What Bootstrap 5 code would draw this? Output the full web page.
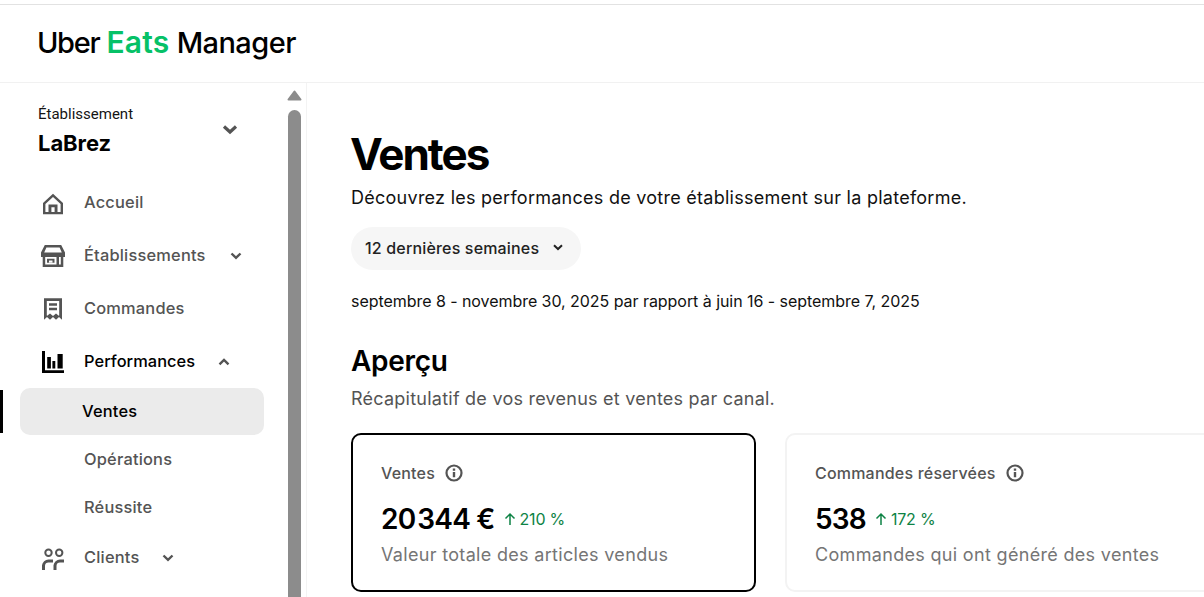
<!DOCTYPE html>
<html lang="fr">
<head>
<meta charset="utf-8">
<title>Uber Eats Manager</title>
<link href="https://cdn.jsdelivr.net/npm/bootstrap@5.3.0/dist/css/bootstrap.min.css" rel="stylesheet">
<style>
html,body{height:597px;overflow:hidden;background:#fff}
body{font-family:"Inter","Liberation Sans",sans-serif;color:#000}
.topline{height:1px;margin-top:4px;background:#e2e2e2}
.appbar{height:78px;border-bottom:1px solid #f1f1f1;padding-left:37px}
.logo{font-size:29px;font-weight:500;letter-spacing:-.55px;line-height:1;color:#000;padding-bottom:4px;white-space:nowrap}
.logo-uber{letter-spacing:-1.35px}
.logo b{font-size:30px;font-weight:600;color:#06c167;letter-spacing:.2px}
.bodyrow{height:514px;overflow:hidden}
.side{width:307px;border-right:1px solid #f3f3f3;flex:none}
.sidenav{width:287px;flex:none;overflow:hidden}
.sbar{width:19px;flex:none;padding-top:7px}
.sbar-arrow{display:block}
.sbar-thumb{width:13px;margin:9px 0 0 1px;height:500px;background:#8c8c8c;border-radius:7px 7px 0 0}
.store{padding:23px 0 0 38px;height:93px}
.store-lbl{font-family:"Roboto",sans-serif;font-size:15px;line-height:16px;color:#141414}
.store-name{font-size:22px;font-weight:700;line-height:30px;margin-top:6px;letter-spacing:-.05px}
.store-chev{margin-left:89px;margin-top:18px}
.nrow{height:53px;padding-left:41px;color:#545454;font-size:16.4px;font-weight:500;letter-spacing:.2px}
.nrow svg.ic{width:24px;height:24px;flex:none;margin-right:19px}
.nrow.on{color:#000;letter-spacing:.05px}
.chev-end{margin-right:45px}
.chev-next{margin-left:23px}
.sub{height:48px;padding-left:84px;color:#545454;font-size:16.4px;font-weight:500;letter-spacing:.2px}
.sub-active{height:47px;margin-left:20px;width:244px;padding-left:62px;background:#ebebeb;border-radius:10px;color:#000;font-size:16.4px;font-weight:500;letter-spacing:.2px}
.mark-wrap{position:relative;height:47px}
.active-tick{position:absolute;left:0;top:2px;width:3px;height:43px;background:#000}
.main{padding-left:44px;min-width:0;overflow:hidden;flex:1}
.pg-title{font-size:44px;font-weight:700;line-height:52px;letter-spacing:-2px;margin-top:45px;margin-bottom:0;margin-left:-1px}
.pg-sub{font-size:18px;font-weight:400;line-height:24px;margin-top:6px;margin-bottom:0;color:#111;letter-spacing:.26px}
.pill{margin-top:17px;height:43px;width:230px;background:#f6f6f6;border-radius:22px;padding:0 18px 2px 14px;font-size:16px;font-weight:500;color:#222;letter-spacing:.17px}
.range{font-size:16px;line-height:22px;margin-top:20px;margin-bottom:0;color:#111;letter-spacing:-.05px}
.h-sec{font-size:28px;font-weight:600;line-height:36px;margin-top:31px;margin-bottom:0;letter-spacing:-.3px}
.h-sub{font-size:18px;line-height:24px;margin-top:8px;margin-bottom:0;color:#545454;letter-spacing:.24px}
.tiles{margin-top:22px;gap:29px;width:900px}
.tile{width:405px;height:159px;flex:none;border:2px solid #000;border-radius:10px;padding:27px 0 0 28px}
.tile.soft{border-color:#f3f3f3;width:470px}
.t-label{font-size:16px;font-weight:500;line-height:22px;color:#545454;letter-spacing:.2px}
.t-label svg{margin-left:10px}
.t-num{font-size:28px;font-weight:600;line-height:36px;margin-top:17px;letter-spacing:-.8px}
.t-gap{margin-left:2px}
.t-delta{font-size:16px;font-weight:400;color:#0e8345;margin-left:9px;letter-spacing:-.2px}
.t-note{font-size:18px;line-height:24px;color:#757575;margin-top:6px;letter-spacing:.32px}
</style>
</head>
<body>
<div class="topline"></div>
<header class="appbar d-flex align-items-center">
  <div class="logo"><span class="logo-uber">Uber</span> <b>Eats</b> Manager</div>
</header>
<div class="bodyrow d-flex">
  <aside class="side d-flex">
    <nav class="sidenav">
      <div class="store d-flex">
        <div>
          <div class="store-lbl">Établissement</div>
          <div class="store-name">LaBrez</div>
        </div>
        <svg class="store-chev align-self-start" width="16" height="12" viewBox="0 0 16 12"><path d="M2 2.500 8 8l6-5.500" fill="none" stroke="#545454" stroke-width="3.200"/></svg>
      </div>
      <div class="nrow d-flex align-items-center">
        <svg class="ic" viewBox="0 0 24 24"><path d="M12 2.700 2 12v11.300h20V12zM12 6l7.600 7v8H4.400v-8zM7.500 13.500h9V21h-9zM10.400 16.200h3.200V21h-3.200z" fill="#545454" fill-rule="evenodd"/></svg>
        <span>Accueil</span>
      </div>
      <div class="nrow d-flex align-items-center">
        <svg class="ic" viewBox="0 0 24 24"><path d="M3.800 1h16.400L24 8.500V13h-1.700v10H1.700V13H0V8.500zM5.400 3.500 3.200 8.500h17.600l-2.200-5zM4.200 13v7.500h11.300V13zM6 14.700h7.500v4H6zM18 13v7.500h1.800V13z" fill="#545454" fill-rule="evenodd"/><path d="M8 16.500h3.500v2.200H8z" fill="#fff"/></svg>
        <span>Établissements</span>
        <svg class="ms-auto chev-end" width="12" height="8" viewBox="0 0 12 8"><path d="M1.500 1.500 6 5.800l4.500-4.300" fill="none" stroke="#545454" stroke-width="2.400"/></svg>
      </div>
      <div class="nrow d-flex align-items-center">
        <svg class="ic" viewBox="0 0 24 24"><path d="M3 1.300h18v21.400l-3-2.600-3 2.600-3-2.600-3 2.600-3-2.600-3 2.600zM5.800 4v14.500l.4.300 2.800-2.400 3 2.500 3-2.500 2.800 2.400.4-.3V4zM8 6.300h8v2.500H8zM8 10.800h8v2.500H8z" fill="#545454" fill-rule="evenodd"/></svg>
        <span>Commandes</span>
      </div>
      <div class="nrow on d-flex align-items-center">
        <svg class="ic" viewBox="0 0 24 24"><path d="M1 1h3v19.300h19V23H1zM6.200 7h3.700v11.500H6.200zM11.400 11h2.900v7.500h-2.900zM16.500 4h5.200v14.500h-5.200z" fill="#000"/></svg>
        <span>Performances</span>
        <svg class="chev-next" width="12" height="8" viewBox="0 0 12 8"><path d="M1.500 6.300 6 2l4.500 4.300" fill="none" stroke="#545454" stroke-width="2.400"/></svg>
      </div>
      <div class="mark-wrap">
        <div class="active-tick"></div>
        <div class="sub-active d-flex align-items-center">Ventes</div>
      </div>
      <div class="sub d-flex align-items-center">Opérations</div>
      <div class="sub d-flex align-items-center">Réussite</div>
      <div class="nrow d-flex align-items-center">
        <svg class="ic" viewBox="0 0 24 24"><circle cx="7.500" cy="6.700" r="3.200" fill="none" stroke="#545454" stroke-width="2"/><circle cx="18.200" cy="6.700" r="3.200" fill="none" stroke="#545454" stroke-width="2"/><path d="M2.500 24v-4.500a5 5 0 0 1 5-4.500H12M14 24v-4.500a5 5 0 0 1 5-4.500h4" fill="none" stroke="#545454" stroke-width="3"/></svg>
        <span>Clients</span>
        <svg class="chev-next" width="12" height="8" viewBox="0 0 12 8"><path d="M1.500 1.500 6 5.800l4.500-4.300" fill="none" stroke="#545454" stroke-width="2.400"/></svg>
      </div>
    </nav>
    <div class="sbar">
      <svg class="sbar-arrow" width="15" height="11" viewBox="0 0 15 11"><path d="M7.500 1.500 13.500 9.500H1.500z" fill="#8c8c8c" stroke="#8c8c8c" stroke-width="2" stroke-linejoin="round"/></svg>
      <div class="sbar-thumb"></div>
    </div>
  </aside>
  <main class="main">
    <h1 class="pg-title">Ventes</h1>
    <p class="pg-sub">Découvrez les performances de votre établissement sur la plateforme.</p>
    <div class="pill d-flex align-items-center justify-content-between">
      <span>12 dernières semaines</span>
      <svg width="10" height="7" viewBox="0 0 10 7"><path d="M1 1.200 5 5l4-3.800" fill="none" stroke="#222" stroke-width="2"/></svg>
    </div>
    <p class="range">septembre 8 - novembre 30, 2025 par rapport à juin 16 - septembre 7, 2025</p>
    <h2 class="h-sec">Aperçu</h2>
    <p class="h-sub">Récapitulatif de vos revenus et ventes par canal.</p>
    <div class="tiles d-flex">
      <div class="tile">
        <div class="t-label d-flex align-items-center">Ventes
          <svg width="18" height="18" viewBox="0 0 18 18"><circle cx="9" cy="9" r="7.500" fill="none" stroke="#545454" stroke-width="2.200"/><path d="M7.800 8h2.400v5.200H7.800zM7.800 4.500h2.400v2.200H7.800z" fill="#545454"/></svg>
        </div>
        <div class="t-num d-flex align-items-center"><span>20<span class="t-gap">344</span>&nbsp;€</span>
          <span class="t-delta d-flex align-items-center"><svg class="me-1" width="12" height="14" viewBox="0 0 12 14"><path d="M6 13V2M1.500 6.500 6 2l4.500 4.500" fill="none" stroke="#0e8345" stroke-width="1.500"/></svg>210 %</span>
        </div>
        <div class="t-note">Valeur totale des articles vendus</div>
      </div>
      <div class="tile soft">
        <div class="t-label d-flex align-items-center">Commandes réservées
          <svg width="18" height="18" viewBox="0 0 18 18"><circle cx="9" cy="9" r="7.500" fill="none" stroke="#545454" stroke-width="2.200"/><path d="M7.800 8h2.400v5.200H7.800zM7.800 4.500h2.400v2.200H7.800z" fill="#545454"/></svg>
        </div>
        <div class="t-num d-flex align-items-center">538
          <span class="t-delta d-flex align-items-center"><svg class="me-1" width="12" height="14" viewBox="0 0 12 14"><path d="M6 13V2M1.500 6.500 6 2l4.500 4.500" fill="none" stroke="#0e8345" stroke-width="1.500"/></svg>172 %</span>
        </div>
        <div class="t-note">Commandes qui ont généré des ventes</div>
      </div>
    </div>
  </main>
</div>
<script src="https://cdn.jsdelivr.net/npm/bootstrap@5.3.0/dist/js/bootstrap.bundle.min.js"></script>
</body>
</html>
